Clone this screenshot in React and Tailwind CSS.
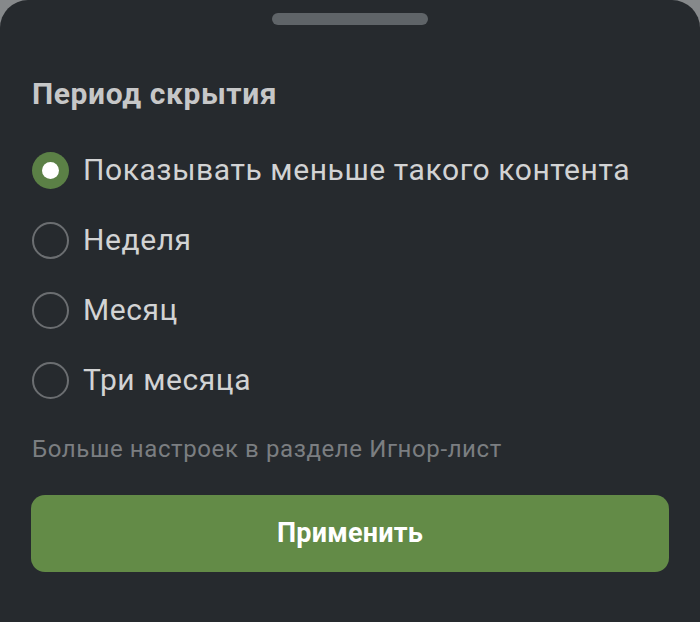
import { useState } from "react";

const OPTIONS = [
    "Показывать меньше такого контента",
    "Неделя",
    "Месяц",
    "Три месяца",
];

function Radio({ checked }) {
    if (checked) {
        return (
            <span className="flex h-[37px] w-[37px] shrink-0 items-center justify-center rounded-full bg-[#5b8046]">
                <span className="h-[17px] w-[17px] rounded-full bg-white" />
            </span>
        );
    }
    return (
        <span className="h-[37px] w-[37px] shrink-0 rounded-full border-2 border-[#6b6e71]" />
    );
}

export default function App() {
    const [selected, setSelected] = useState(0);

    return (
        <div className="h-[622px] w-[700px] overflow-hidden bg-[#86898b]">
            <div
                className="flex h-full flex-col rounded-t-[28px] bg-[#262a2e] px-[32px]"
                style={{ fontFamily: "Roboto, 'Noto Sans', sans-serif" }}
            >
                <div className="mx-auto mt-[13px] h-[12px] w-[156px] rounded-full bg-[#5f6468]" />

                <h2 className="mt-[52px] text-[30px] font-bold leading-[34px] tracking-[0.6px] text-[#c6c7c8]">
                    Период скрытия
                </h2>

                <div className="mt-[24px] flex flex-col">
                    {OPTIONS.map((label, i) => (
                        <button
                            key={label}
                            className="flex h-[70px] items-center gap-[14px] text-left"
                            onClick={() => setSelected(i)}
                        >
                            <Radio checked={selected === i} />
                            <span className="text-[30px] leading-[36px] tracking-[0.58px] text-[#d2d3d4]">
                                {label}
                            </span>
                        </button>
                    ))}
                </div>

                <p className="mt-[20px] text-[24px] leading-[28px] tracking-[0.6px] text-[#7b7e81]">
                    Больше настроек в разделе Игнор-лист
                </p>

                <button className="-mx-px mt-[32px] flex h-[77px] items-center justify-center rounded-[14px] bg-[#638b47] text-[27px] font-bold tracking-[0.2px] text-white">
                    Применить
                </button>
            </div>
        </div>
    );
}
